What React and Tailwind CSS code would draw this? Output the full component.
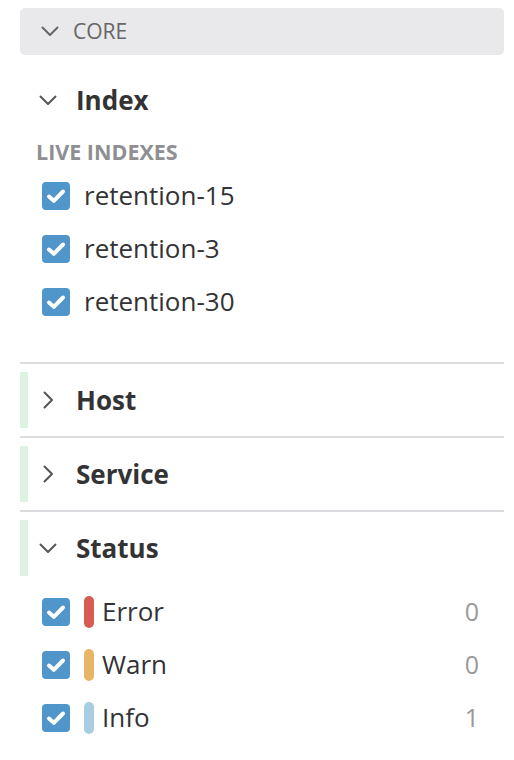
const FONT = { fontFamily: '"Open Sans", "Noto Sans", sans-serif' }

function ChevronDown({ className = '' }) {
  return (
    <svg width="18" height="11" viewBox="0 0 18 11" className={className} fill="none">
      <polyline points="1.5,1.5 9,9 16.5,1.5" stroke="currentColor" strokeWidth="2" strokeLinecap="round" strokeLinejoin="round" />
    </svg>
  )
}

function ChevronRight({ className = '' }) {
  return (
    <svg width="11" height="18" viewBox="0 0 11 18" className={className} fill="none">
      <polyline points="1.5,1.5 9,9 1.5,16.5" stroke="currentColor" strokeWidth="2" strokeLinecap="round" strokeLinejoin="round" />
    </svg>
  )
}

function Check() {
  return (
    <span className="w-[28px] h-[28px] rounded-[4px] bg-[#5196cb] flex items-center justify-center shrink-0">
      <svg width="20" height="16" viewBox="0 0 20 16" fill="none">
        <polyline points="3,8.5 7.8,12.8 17,3.5" stroke="white" strokeWidth="4" strokeLinecap="round" strokeLinejoin="round" />
      </svg>
    </span>
  )
}

function Header({ label, open, marked }) {
  return (
    <div className="flex items-center h-[56px]">
      <div className={`w-[8px] h-full shrink-0 ${marked ? 'bg-[#dcf2e2]' : ''}`} />
      <div className="w-[40px] flex justify-center text-[#555]">
        {open ? <ChevronDown /> : <ChevronRight />}
      </div>
      <span className="ml-[8px] text-[26px] font-bold text-[#333336]">{label}</span>
    </div>
  )
}

const INDEXES = ['retention-15', 'retention-3', 'retention-30']
const STATUS = [
  { label: 'Error', color: 'bg-[#d65c52]', count: 0 },
  { label: 'Warn', color: 'bg-[#e8b566]', count: 0 },
  { label: 'Info', color: 'bg-[#a7cde3]', count: 1 },
]

export default function App() {
  return (
    <div className="w-[514px] h-[760px] bg-white pl-5 pr-[10px] pt-2 overflow-hidden" style={FONT}>
      {/* Core group */}
      <div className="h-[47px] rounded-[5px] bg-[#e9e9eb] flex items-center pl-[21px] text-[#666]">
        <ChevronDown />
        <span className="ml-[14px] text-[21px] leading-none">CORE</span>
      </div>

      {/* Index */}
      <div className="mt-[17px]">
        <Header label="Index" open />
        <div className="pl-[16px] mt-[12px] h-[24px] flex items-center text-[21.5px] font-bold text-[#8e8e93]">
          LIVE INDEXES
        </div>
        <div className="mt-[5px] mb-[34px]">
          {INDEXES.map((name) => (
            <div key={name} className="h-[53px] flex items-center pl-[22px]">
              <Check />
              <span className="ml-[14px] text-[26px] text-[#333336]">{name}</span>
            </div>
          ))}
        </div>
      </div>

      {['Host', 'Service'].map((s) => (
        <div key={s} className="border-t-2 border-[#dcdce0] py-2">
          <Header label={s} marked />
        </div>
      ))}

      <div className="border-t-2 border-[#dcdce0] pt-2">
        <Header label="Status" open marked />
        <div className="mt-[9px]">
          {STATUS.map((s) => (
            <div key={s.label} className="h-[53px] flex items-center pl-[22px] pr-[25px]">
              <Check />
              <span className={`ml-[14px] w-[10px] h-[32px] rounded-full ${s.color}`} />
              <span className="ml-[8px] text-[26px] text-[#333336]">{s.label}</span>
              <span className="ml-auto text-[25px] text-[#999]">{s.count}</span>
            </div>
          ))}
        </div>
      </div>
    </div>
  )
}
